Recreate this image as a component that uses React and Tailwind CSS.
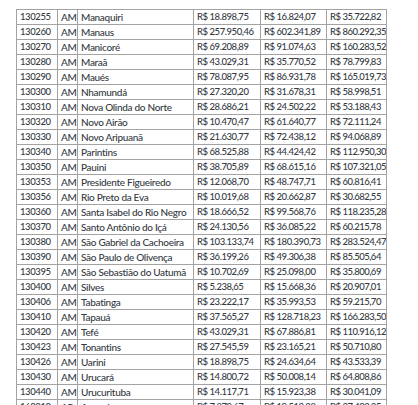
import React from "react";

const rows = [
  ["130255", "AM", "Manaquiri", "18.898,75", "16.824,07", "35.722,82"],
  ["130260", "AM", "Manaus", "257.950,46", "602.341,89", "860.292,35"],
  ["130270", "AM", "Manicoré", "69.208,89", "91.074,63", "160.283,52"],
  ["130280", "AM", "Maraã", "43.029,31", "35.770,52", "78.799,83"],
  ["130290", "AM", "Maués", "78.087,95", "86.931,78", "165.019,73"],
  ["130300", "AM", "Nhamundá", "27.320,20", "31.678,31", "58.998,51"],
  ["130310", "AM", "Nova Olinda do Norte", "28.686,21", "24.502,22", "53.188,43"],
  ["130320", "AM", "Novo Airão", "10.470,47", "61.640,77", "72.111,24"],
  ["130330", "AM", "Novo Aripuanã", "21.630,77", "72.438,12", "94.068,89"],
  ["130340", "AM", "Parintins", "68.525,88", "44.424,42", "112.950,30"],
  ["130350", "AM", "Pauini", "38.705,89", "68.615,16", "107.321,05"],
  ["130353", "AM", "Presidente Figueiredo", "12.068,70", "48.747,71", "60.816,41"],
  ["130356", "AM", "Rio Preto da Eva", "10.019,68", "20.662,87", "30.682,55"],
  ["130360", "AM", "Santa Isabel do Rio Negro", "18.666,52", "99.568,76", "118.235,28"],
  ["130370", "AM", "Santo Antônio do Içá", "24.130,56", "36.085,22", "60.215,78"],
  ["130380", "AM", "São Gabriel da Cachoeira", "103.133,74", "180.390,73", "283.524,47"],
  ["130390", "AM", "São Paulo de Olivença", "36.199,26", "49.306,38", "85.505,64"],
  ["130395", "AM", "São Sebastião do Uatumã", "10.702,69", "25.098,00", "35.800,69"],
  ["130400", "AM", "Silves", "5.238,65", "15.668,36", "20.907,01"],
  ["130406", "AM", "Tabatinga", "23.222,17", "35.993,53", "59.215,70"],
  ["130410", "AM", "Tapauá", "37.565,27", "128.718,23", "166.283,50"],
  ["130420", "AM", "Tefé", "43.029,31", "67.886,81", "110.916,12"],
  ["130423", "AM", "Tonantins", "27.545,59", "23.165,21", "50.710,80"],
  ["130426", "AM", "Uarini", "18.898,75", "24.634,64", "43.533,39"],
  ["130430", "AM", "Urucará", "14.800,72", "50.008,14", "64.808,86"],
  ["130440", "AM", "Urucurituba", "14.117,71", "15.923,38", "30.041,09"],
  ["160010", "AP", "Amapá", "7.879,67", "19.512,28", "27.403,35"],
];

// numeric columns get a slightly smaller size so the values fit like the original
const cellText = [
  "text-[9.5px] tracking-[-0.4px]",
  "text-[10px] tracking-[-0.2px]",
  "text-[10px] tracking-[-0.3px]",
  "text-[9.5px] tracking-[-0.45px]",
  "text-[9.5px] tracking-[-0.45px]",
  "text-[9.5px] tracking-[-0.5px]",
];

export default function App() {
  return (
    <div className="bg-white h-[405px] overflow-hidden pl-[16px] pt-[9px]">
      <table
        className="table-fixed border-collapse w-[370px] text-[#363a42] font-medium"
        style={{ fontFamily: "Lato, 'Open Sans', sans-serif" }}
      >
        <colgroup>
          <col className="w-[41px]" />
          <col className="w-[20px]" />
          <col className="w-[116px]" />
          <col className="w-[67px]" />
          <col className="w-[66px]" />
          <col className="w-[60px]" />
        </colgroup>
        <tbody>
          {rows.map((r) => (
            <tr key={r[0]} className="h-[15px]">
              {r.map((c, i) => (
                <td
                  key={i}
                  className={
                    "border border-[#a3a3a3] pl-[3px] pr-0 py-0 leading-[14px] whitespace-nowrap overflow-hidden " +
                    cellText[i]
                  }
                >
                  {i >= 3 ? "R$ " + c : c}
                </td>
              ))}
            </tr>
          ))}
        </tbody>
      </table>
    </div>
  );
}
